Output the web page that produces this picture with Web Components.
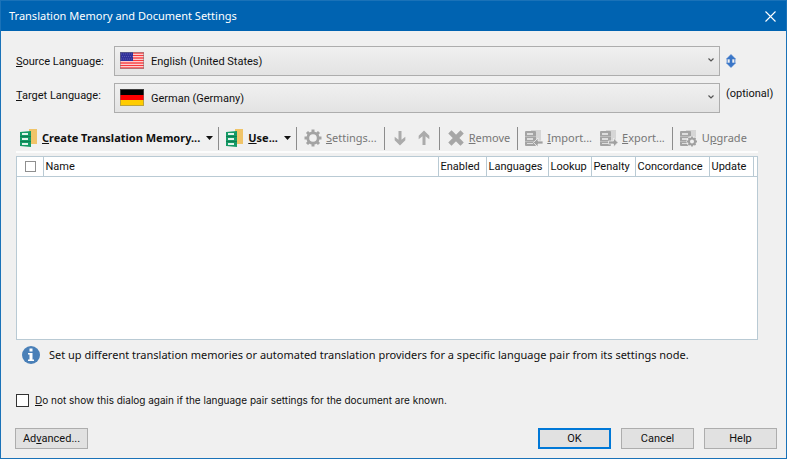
<!DOCTYPE html>
<html lang="en">
<head>
<meta charset="utf-8">
<title>Translation Memory and Document Settings</title>
<style>
  body {
    margin: 0;
    background: #f0f0f0;
    color: #111;
    font: 11px/16px Roboto, "Liberation Sans", sans-serif;
  }
</style>
</head>
<body>
<settings-dialog></settings-dialog>

<!-- window frame: title bar, content, footer -->
<template id="dialog-frame-template">
<style>
  :host {
    display: flex;
    flex-direction: column;
    box-sizing: border-box;
    min-height: 100vh;
    border: 1px solid #1a72b8;
    background: #f0f0f0;
  }
  header {
    display: flex;
    align-items: center;
    justify-content: space-between;
    height: 30px;
    padding: 0 8px;
    background: #0063b1;
    color: #fff;
  }
  h1 {
    margin: 0;
    font: 11px/16px "Noto Sans", sans-serif;
  }
  button {
    display: flex;
    padding: 2px;
    border: 0;
    background: none;
    color: inherit;
  }
  main {
    display: flex;
    flex-direction: column;
    flex: 1;
  }
  footer {
    display: flex;
    gap: 10px;
    padding: 20px 9px 9px 14px;
  }
</style>
<header>
  <h1></h1>
  <button type="button" aria-label="Close">
    <svg width="11" height="11" viewBox="0 0 11 11" fill="none" stroke="currentColor" stroke-width="1.1"><path d="M.5 .5l10 10M10.500 .5l-10 10"/></svg>
  </button>
</header>
<main><slot></slot></main>
<footer><slot name="footer"></slot></footer>
</template>

<!-- label + drop-down with a flag -->
<template id="language-field-template">
<style>
  :host {
    display: grid;
    grid-template-columns: 98px 1fr 50px;
    align-items: center;
  }
  :host([top]) { align-items: start; }
  label, .after { line-height: 22px; }
  label { padding-top: 2px; }
  .after {
    display: flex;
    padding-left: 6px;
  }
  .box {
    position: relative;
    display: grid;
  }
  select {
    appearance: none;
    height: 30px;
    padding: 2px 24px 0 36px;
    border: 1px solid #adadad;
    border-radius: 0;
    background: linear-gradient(#f0f0f0, #e3e3e3);
    color: inherit;
    font: inherit;
  }
  .flag, .chevron {
    position: absolute;
    pointer-events: none;
  }
  .flag { left: 6px; top: 6px; }
  .chevron { right: 6px; top: 12px; }
</style>
<label for="language"><slot name="label"></slot></label>
<div class="box">
  <select id="language"><option></option></select>
  <svg class="flag" width="24" height="17" viewBox="0 0 24 17"></svg>
  <svg class="chevron" width="6" height="4" viewBox="0 0 6 4" fill="none" stroke="#555" stroke-width="1.2"><path d="M.5 .5L3 3 5.500 .5"/></svg>
</div>
<div class="after"><slot name="after"></slot></div>
</template>

<template id="tool-bar-template">
<style>
  :host {
    display: flex;
    align-items: center;
    height: 26px;
    border-bottom: 2px solid #fcfcfc;
  }
</style>
<slot></slot>
</template>

<template id="tool-separator-template">
<style>
  :host {
    flex: none;
    width: 1px;
    height: 23px;
    margin: 0 3px;
    background: #8c8c8c;
  }
</style>
</template>

<template id="tool-button-template">
<style>
  :host { display: flex; }
  button {
    display: flex;
    align-items: center;
    gap: 4px;
    padding: 0 4px;
    border: 0;
    background: none;
    color: #111;
    font: 11px/18px "Noto Sans", sans-serif;
    white-space: nowrap;
  }
  button:disabled { color: #777; }
  .icon { width: 18px; }
  .drop { padding: 0 2px; }
  :host([label]) .icon { width: 16px; }
  :host([strong]) button { font-weight: 700; }
  :host(:not([menu])) .drop { display: none; }
</style>
<button type="button" class="main"><svg class="icon" height="18" viewBox="0 0 18 18"></svg><span><slot></slot></span></button>
<button type="button" class="drop"><svg width="7" height="4" viewBox="0 0 7 4"><path d="M0 0h7L3.500 4z" fill="#111"/></svg></button>
</template>

<template id="memory-grid-template">
<style>
  :host {
    display: block;
    border: 1px solid #b9cad4;
    background: #fff;
  }
  table {
    width: 100%;
    table-layout: fixed;
    border-collapse: collapse;
  }
  th {
    height: 18px;
    padding: 1px 0 0 2px;
    border-right: 1px solid #b9cad4;
    border-bottom: 1px solid #b9cad4;
    font-weight: 400;
    text-align: left;
    white-space: nowrap;
  }
  th:last-child { border-right: 0; }
  th:first-child { padding: 0 0 1px 8px; }
  input {
    appearance: none;
    display: block;
    width: 11px;
    height: 11px;
    margin: 0;
    border: 1px solid #8f8f8f;
    background: #fff;
  }
</style>
<table>
  <colgroup><col style="width:26px"><col><col style="width:48px"><col style="width:62px"><col style="width:43px"><col style="width:44px"><col style="width:74px"><col style="width:44px"><col style="width:4px"></colgroup>
  <thead>
    <tr>
      <th><input type="checkbox" aria-label="Select all"></th>
      <th>Name</th><th>Enabled</th><th>Languages</th><th>Lookup</th><th>Penalty</th><th>Concordance</th><th>Update</th><th></th>
    </tr>
  </thead>
  <tbody></tbody>
</table>
</template>

<template id="info-note-template">
<style>
  :host {
    display: flex;
    align-items: center;
    gap: 9px;
    font-family: "Noto Sans", sans-serif;
  }
  svg { flex: none; }
</style>
<svg width="18" height="18" viewBox="0 0 18 18"><circle cx="9" cy="9" r="9" fill="#4a80b8"/><path d="M7.500 2.500h3v3h-3zM6 7h4.500v6.500H12V15H6v-1.500h1.500v-5H6z" fill="#fff"/></svg>
<span><slot></slot></span>
</template>

<template id="check-field-template">
<style>
  :host {
    display: flex;
    align-items: center;
    gap: 6px;
  }
  input {
    appearance: none;
    width: 13px;
    height: 13px;
    margin: 0;
    border: 1px solid #333;
    background: #fff;
  }
  label { font: 10px/16px Inter, sans-serif; }
</style>
<input type="checkbox" id="check"><label for="check"><slot></slot></label>
</template>

<template id="push-button-template">
<style>
  :host { display: flex; }
  button {
    width: 73px;
    height: 21px;
    padding: 0;
    border: 1px solid #adadad;
    background: #e1e1e1;
    color: inherit;
    font: inherit;
  }
  :host([primary]) button { border: 2px solid #0078d7; }
</style>
<button type="button"><slot></slot></button>
</template>

<template id="settings-dialog-template">
<style>
  :host { display: block; }
  .languages {
    display: grid;
    gap: 7px;
    padding: 15px 16px 12px 15px;
  }
  .swap {
    display: flex;
    padding: 0;
    border: 0;
    background: none;
  }
  tool-bar, memory-grid { margin: 0 28px 0 15px; }
  memory-grid { flex: 1; margin-top: 3px; }
  info-note { margin: 6px 28px 0 21px; }
  check-field { margin: 28px 28px 0 15px; }
  .push { margin-left: auto; }
</style>
<dialog-frame heading="Translation Memory and Document Settings">
  <div class="languages">
    <language-field flag="us" value="English (United States)">
      <span slot="label"><u>S</u>ource Language:</span>
      <button type="button" class="swap" slot="after" aria-label="Swap languages">
        <svg width="10" height="14" viewBox="0 0 10 14"><path d="M5 .5L9.500 5H6v4h3.500L5 13.500 .5 9H4V5H.5z" fill="#3a76c8" stroke="#3a76c8" stroke-width=".6"/><path d="M1.200 5v4M8.800 5v4" stroke="#6794d4" stroke-width="1.200"/></svg>
      </button>
    </language-field>
    <language-field top flag="de" value="German (Germany)">
      <span slot="label"><u>T</u>arget Language:</span>
      <span slot="after">(optional)</span>
    </language-field>
  </div>
  <tool-bar>
    <tool-button icon="memory" strong menu><u>C</u>reate Translation Memory...</tool-button>
    <tool-separator></tool-separator>
    <tool-button icon="memory" strong menu><u>U</u>se...</tool-button>
    <tool-separator></tool-separator>
    <tool-button icon="gear" disabled><u>S</u>ettings...</tool-button>
    <tool-separator></tool-separator>
    <tool-button icon="down" label="Move down" disabled></tool-button>
    <tool-button icon="up" label="Move up" disabled></tool-button>
    <tool-separator></tool-separator>
    <tool-button icon="remove" disabled><u>R</u>emove</tool-button>
    <tool-separator></tool-separator>
    <tool-button icon="import" disabled><u>I</u>mport...</tool-button>
    <tool-button icon="export" disabled><u>E</u>xport...</tool-button>
    <tool-separator></tool-separator>
    <tool-button icon="upgrade" disabled>U<u>p</u>grade</tool-button>
  </tool-bar>
  <memory-grid></memory-grid>
  <info-note>Set up different translation memories or automated translation providers for a specific language pair from its settings node.</info-note>
  <check-field><u>D</u>o not show this dialog again if the language pair settings for the document are known.</check-field>
  <push-button slot="footer">Ad<u>v</u>anced...</push-button>
  <push-button slot="footer" class="push" primary>OK</push-button>
  <push-button slot="footer">Cancel</push-button>
  <push-button slot="footer">Help</push-button>
</dialog-frame>
</template>

<script>
// database stack, shared by the import, export and upgrade icons
const STACK = `
  <path d="M6 1h10v14H6z" fill="#d6d6d6"/>
  <rect y="2" width="11" height="15" rx="1" fill="#a4a4a4"/>
  <path d="M2 4h6v2H2zM2 9h6v2H2zM2 14h6v1H2z" fill="#dedede"/>
  <path d="M0 7h11v1H0zM0 12h11v1H0z" fill="#bcbcbc"/>`;

const ICONS = {
  memory: `
    <path d="M9 0h8v15H9z" fill="#f0c468"/>
    <path d="M0 3l11-1v16L0 17z" fill="#159a66"/>
    <path d="M2 4h6v2H2zM2 9h6v2H2zM2 14h6v2H2z" fill="#e2f4eb"/>
    <path d="M0 7h11v1H0zM0 12h11v1H0z" fill="#0e7f52"/>`,
  gear: `
    <circle cx="9" cy="9" r="5.200" fill="none" stroke="#a3a3a3" stroke-width="2.800"/>
    <path d="M9 .5v3M9 14.500v3M.5 9h3M14.500 9h3M3 3l2 2M13 13l2 2M3 15l2-2M13 5l2-2" stroke="#a3a3a3" stroke-width="3"/>`,
  down: `<path d="M7.300 1h3.400v10L15 7.600v4L9 17.500l-6-5.900v-4L7.300 11z" fill="#ababab"/>`,
  up: `<path d="M7.300 17h3.400V7L15 10.400v-4L9 .5 3 6.400v4L7.300 7z" fill="#ababab"/>`,
  remove: `<path d="M4.500 4.500l9 9M13.500 4.500l-9 9" stroke="#a6a6a6" stroke-width="4.600" stroke-linecap="square"/>`,
  import: STACK + `<path d="M8.500 13.500l4.500-4.500v3h5v3h-5v3z" fill="#a0a0a0" stroke="#f0f0f0" stroke-width=".8"/>`,
  export: STACK + `<path d="M18 13.500L13.500 9v3h-5v3h5v3z" fill="#a0a0a0" stroke="#f0f0f0" stroke-width=".8"/>`,
  upgrade: STACK + `
    <circle cx="12" cy="12.500" r="5.500" fill="#f0f0f0"/>
    <circle cx="12" cy="12.500" r="3" fill="none" stroke="#a0a0a0" stroke-width="2"/>
    <path d="M12 7.500v2M12 15.500v2M7 12.500h2M15 12.500h2M8.500 9L10 10.500M14 14.500l1.500 1.500M8.500 16l1.500-1.500M14 10.500L15.500 9" stroke="#a0a0a0" stroke-width="1.800"/>`
};

const FLAGS = {
  us: `
    <rect width="24" height="17" fill="#fff"/>
    <path d="M0 1h24M0 3.500h24M0 6h24M0 8.500h24M0 11h24M0 13.500h24M0 16h24" stroke="#f8383c" stroke-width="1.600"/>
    <rect width="13" height="9" fill="#30309a"/>
    <path d="M1 2h12M2 4.500h11M1 7h12" stroke="#6a6abb" stroke-width=".7" stroke-dasharray="1 1"/>
    <rect x=".5" y=".5" width="23" height="16" fill="none" stroke="#777" stroke-opacity=".5"/>`,
  de: `
    <rect width="24" height="6" fill="#000"/>
    <rect y="6" width="24" height="5" fill="#f00"/>
    <rect y="11" width="24" height="6" fill="#fc0"/>
    <rect x=".5" y=".5" width="23" height="16" fill="none" stroke="#777" stroke-opacity=".5"/>`
};

// every element clones the template that carries its own name
class BaseElement extends HTMLElement {
  constructor() {
    super();
    this.attachShadow({ mode: "open" });
    const template = document.getElementById(this.localName + "-template");
    this.shadowRoot.appendChild(template.content.cloneNode(true));
  }

  find(selector) {
    return this.shadowRoot.querySelector(selector);
  }
}

class DialogFrame extends BaseElement {
  connectedCallback() {
    this.find("h1").textContent = this.getAttribute("heading");
  }
}

class LanguageField extends BaseElement {
  connectedCallback() {
    this.find("option").textContent = this.getAttribute("value");
    this.find(".flag").innerHTML = FLAGS[this.getAttribute("flag")];
  }
}

class ToolButton extends BaseElement {
  connectedCallback() {
    const main = this.find(".main");
    this.find(".icon").innerHTML = ICONS[this.getAttribute("icon")];
    main.disabled = this.hasAttribute("disabled");
    this.find(".drop").setAttribute("aria-label", "More options");

    // icon-only buttons have no text slot to fill
    if (this.hasAttribute("label")) {
      main.setAttribute("aria-label", this.getAttribute("label"));
      this.find("span").remove();
    }
  }
}

customElements.define("dialog-frame", DialogFrame);
customElements.define("language-field", LanguageField);
customElements.define("tool-bar", class extends BaseElement {});
customElements.define("tool-separator", class extends BaseElement {});
customElements.define("tool-button", ToolButton);
customElements.define("memory-grid", class extends BaseElement {});
customElements.define("info-note", class extends BaseElement {});
customElements.define("check-field", class extends BaseElement {});
customElements.define("push-button", class extends BaseElement {});
customElements.define("settings-dialog", class extends BaseElement {});
</script>
</body>
</html>
